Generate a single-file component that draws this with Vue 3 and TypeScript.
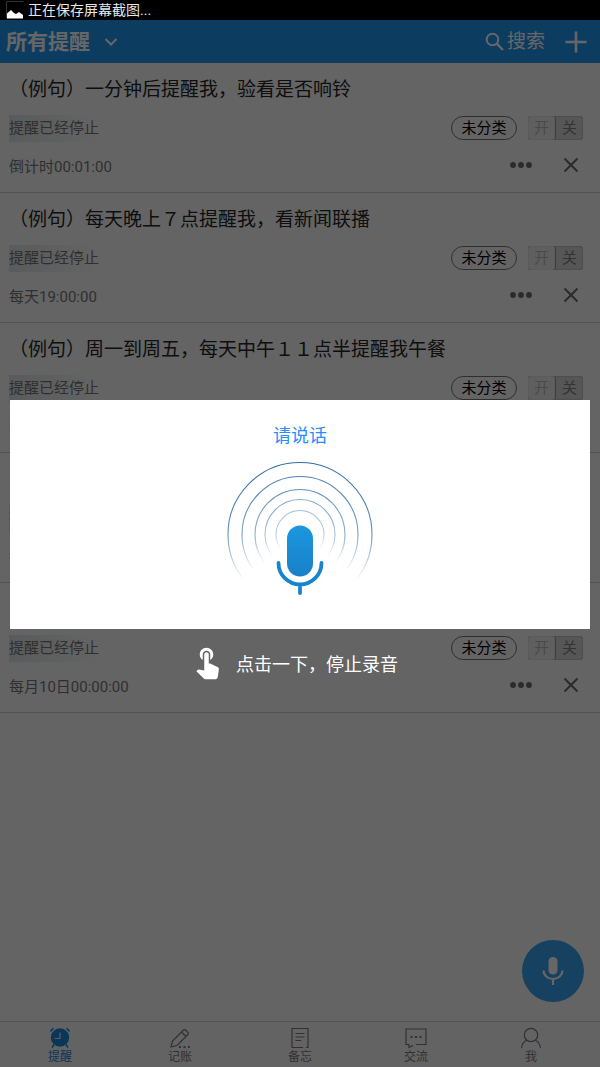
<script setup lang="ts">
import { ref } from 'vue'

interface Reminder {
  id: number
  title: string
  schedule: string
  enabled: boolean
}

const reminders = ref<Reminder[]>([
  { id: 1, title: '（例句）一分钟后提醒我，验看是否响铃', schedule: '倒计时00:01:00', enabled: false },
  { id: 2, title: '（例句）每天晚上７点提醒我，看新闻联播', schedule: '每天19:00:00', enabled: false },
  { id: 3, title: '（例句）周一到周五，每天中午１１点半提醒我午餐', schedule: '每周11:30:00', enabled: false },
  { id: 4, title: '（例句）每年提醒我，过生日', schedule: '每年00:00:00', enabled: false },
  { id: 5, title: '（例句）每月１０日提醒我，还款', schedule: '每月10日00:00:00', enabled: false },
])

const rings = [72, 58, 45, 35, 24]
const tabs = [
  { key: 'remind', label: '提醒' },
  { key: 'account', label: '记账' },
  { key: 'memo', label: '备忘' },
  { key: 'chat', label: '交流' },
  { key: 'me', label: '我' },
]
const activeTab = ref('remind')
</script>

<template>
  <div class="screen">
    <div class="status-bar">
      <svg class="picture" viewBox="0 0 18 18" aria-hidden="true">
        <path d="M0.5 17V0.500h17" fill="none" stroke="#333" />
        <path d="M1 17.500v-5L5 9l3 3 2 1 3-2 4 3v3.500z" fill="#fff" />
      </svg>
      <span>正在保存屏幕截图...</span>
    </div>

    <div class="app">
      <header class="top-bar">
        <button class="filter" type="button">
          <span>所有提醒</span>
          <svg width="14" height="10" viewBox="0 0 14 10" aria-hidden="true">
            <path d="M1.500 2l5.500 5.500L12.500 2" fill="none" stroke="currentColor" stroke-width="2" />
          </svg>
        </button>
        <button class="search" type="button">
          <svg width="20" height="20" viewBox="0 0 20 20" fill="none" stroke="currentColor" aria-hidden="true">
            <circle cx="7.500" cy="7.500" r="5.800" stroke-width="2" />
            <path d="M11.700 11.700l6.300 6.300" stroke-width="2.400" />
          </svg>
          <span>搜索</span>
        </button>
        <button class="add" type="button" aria-label="添加">
          <svg width="22" height="22" viewBox="0 0 22 22" aria-hidden="true">
            <path d="M11 0.500v21M0.500 11h21" stroke="currentColor" stroke-width="2.600" />
          </svg>
        </button>
      </header>

      <main>
        <ul class="list">
          <li v-for="item in reminders" :key="item.id" class="row">
            <h2 class="title">{{ item.title }}</h2>
            <div class="line state-line">
              <span class="state">提醒已经停止</span>
              <button class="tag" type="button">未分类</button>
              <label class="switch">
                <input v-model="item.enabled" type="checkbox" aria-label="提醒开关" />
                <span class="on">开</span>
                <span class="off">关</span>
              </label>
            </div>
            <div class="line">
              <span class="schedule">{{ item.schedule }}</span>
              <button class="icon-button more" type="button" aria-label="更多">
                <svg width="24" height="8" viewBox="0 0 24 8" fill="currentColor" aria-hidden="true">
                  <circle cx="4" cy="4" r="2.900" />
                  <circle cx="12" cy="4" r="2.900" />
                  <circle cx="20" cy="4" r="2.900" />
                </svg>
              </button>
              <button class="icon-button" type="button" aria-label="删除">
                <svg width="16" height="16" viewBox="0 0 16 16" aria-hidden="true">
                  <path d="M1.500 1.500l13 13M14.500 1.500l-13 13" stroke="currentColor" stroke-width="2" />
                </svg>
              </button>
            </div>
          </li>
        </ul>
        <button class="record" type="button" aria-label="语音">
          <svg width="24" height="32" viewBox="0 0 24 32" fill="none" stroke="currentColor" aria-hidden="true">
            <rect x="7.500" y="2" width="9" height="17.500" rx="4.500" fill="currentColor" stroke="none" />
            <path d="M2.500 15.500a9.500 8.500 0 0 0 19 0M12 24v6" stroke-width="2.200" />
          </svg>
        </button>
      </main>

      <nav class="tabs">
        <button
          v-for="tab in tabs"
          :key="tab.key"
          type="button"
          :class="['tab', { active: tab.key === activeTab }]"
          @click="activeTab = tab.key"
        >
          <svg width="22" height="22" viewBox="0 0 22 22" fill="none" stroke="currentColor" stroke-width="1.200" aria-hidden="true">
            <g v-if="tab.key === 'remind'">
              <circle cx="11" cy="10.500" r="9.200" fill="currentColor" stroke="none" />
              <path d="M1.500 4.500q1-2 3-3M20.500 4.500q-1-2-3-3M5 17.500l-2 3M17 17.500l2 3" stroke-width="1.600" />
              <path d="M11 5.500V11.500H5.500" stroke="#e8e8e8" />
            </g>
            <g v-else-if="tab.key === 'account'">
              <path d="M2 20l1.500-6L14 3.500q1.500-1.800 3 0l1.500 1.500q1.500 1.500 0 3L8 18.500zM12.500 5l4.500 4.500" />
              <path d="M10 20h2M14.500 20h2M19 20h2" stroke-width="2" />
            </g>
            <g v-else-if="tab.key === 'memo'">
              <path d="M17 20.500h2V1.500H3v19h11M6.500 6.500h9M6.500 10h9M6.500 13.500h6" />
            </g>
            <g v-else-if="tab.key === 'chat'">
              <path d="M11 17.500h10V2H1v15.500h3v3l4-2" />
              <path d="M5.500 10h2M10 10h2M14.500 10h2" stroke-width="2" />
            </g>
            <g v-else>
              <circle cx="11" cy="8" r="6.700" />
              <path d="M1.500 21q.5-5.500 5.500-8M20.500 21q-.5-5.500-5.500-8" />
            </g>
          </svg>
          <span>{{ tab.label }}</span>
        </button>
      </nav>

      <div class="overlay">
        <section class="dialog" role="dialog" aria-label="请说话">
          <p class="prompt">请说话</p>
          <svg class="voice" width="160" height="150" viewBox="220 454 160 150" fill="none" aria-hidden="true">
            <defs>
              <linearGradient id="ring-fade" x1="0" y1="0" x2="0" y2="1">
                <stop offset="0" stop-color="#2f6da5" />
                <stop offset="0.500" stop-color="#2f6da5" stop-opacity="0.750" />
                <stop offset="0.820" stop-color="#2f6da5" stop-opacity="0" />
              </linearGradient>
              <linearGradient id="mic-fill" x1="0" y1="0" x2="0" y2="1">
                <stop offset="0" stop-color="#1c97df" />
                <stop offset="1" stop-color="#1880c8" />
              </linearGradient>
            </defs>
            <circle
              v-for="(r, i) in rings"
              :key="r"
              cx="300"
              cy="534.500"
              :r="r"
              stroke="url(#ring-fade)"
              stroke-width="1.100"
              :opacity="1 - i * 0.14"
            />
            <rect x="287" y="525.500" width="26" height="51" rx="13" fill="url(#mic-fill)" />
            <path d="M278.500 563a21.500 21.500 0 0 0 43 0M300 585v8" stroke="#1785cd" stroke-width="3.800" stroke-linecap="round" />
          </svg>
        </section>
        <button class="hint" type="button">
          <svg width="24" height="33" viewBox="4.500 2.500 16 22" fill="currentColor" aria-hidden="true">
            <path d="M9 11.240V7.500C9 6.120 10.120 5 11.500 5S14 6.120 14 7.500v3.740c1.210-.81 2-2.180 2-3.740C16 5.010 13.990 3 11.500 3S7 5.010 7 7.500c0 1.560.79 2.930 2 3.740zm9.840 4.630l-4.540-2.260c-.17-.07-.35-.11-.54-.11H13v-6c0-.83-.67-1.500-1.500-1.500S10 6.670 10 7.500v10.740l-3.430-.72c-.08-.01-.15-.03-.24-.03-.31 0-.59.13-.79.33l-.79.8 4.940 4.940c.27.27.65.44 1.060.44h6.790c.75 0 1.330-.55 1.440-1.280l.75-5.270c.01-.07.02-.14.02-.2 0-.62-.38-1.160-.91-1.380z" />
          </svg>
          <span>点击一下，停止录音</span>
        </button>
      </div>
    </div>
  </div>
</template>

<style scoped>
.screen {
  display: flex;
  flex-direction: column;
  min-height: 100vh;
  font-family: Roboto, "Noto Sans CJK SC", sans-serif;
  background: #fafafa;
}
button {
  margin: 0;
  padding: 0;
  border: 0;
  background: none;
  font-family: inherit;
  color: inherit;
  cursor: pointer;
}
svg {
  display: block;
  flex: none;
}
.status-bar {
  display: flex;
  align-items: center;
  gap: 4px;
  height: 20px;
  padding-left: 6px;
  overflow: hidden;
  background: #000;
  color: #e6e6e6;
  font-size: 14px;
  line-height: 22px;
}
.picture {
  width: 18px;
  height: 18px;
}
.app {
  position: relative;
  display: flex;
  flex: 1;
  flex-direction: column;
}
.top-bar {
  display: flex;
  align-items: center;
  height: 43px;
  padding: 0 13px 0 6px;
  background: #2196f3;
  color: #fff;
}
.filter {
  display: flex;
  align-items: center;
  gap: 14px;
  margin-right: auto;
  font-size: 21px;
  font-weight: 700;
  line-height: 42px;
}
.search {
  display: flex;
  align-items: center;
  gap: 2px;
  margin-right: 20px;
  font-size: 19px;
  line-height: 42px;
}
main {
  position: relative;
  flex: 1;
}
.list {
  margin: 0;
  padding: 0;
  list-style: none;
}
.row {
  padding: 0 17px 1px 9px;
  border-bottom: 1px solid #cacaca;
}
.title {
  margin: 0;
  overflow: hidden;
  color: #262626;
  font-size: 19px;
  font-weight: 400;
  line-height: 54px;
  white-space: nowrap;
}
.line {
  display: flex;
  align-items: center;
  height: 52px;
  color: #777;
  font-size: 15px;
}
.state-line {
  height: 22px;
}
.state {
  margin-right: auto;
  background: linear-gradient(90deg, #dde4e6, #fafafa);
  line-height: 27px;
}
.schedule {
  margin-right: auto;
}
.tag {
  width: 66px;
  height: 24px;
  margin-right: 11px;
  border: 1px solid #777;
  border-radius: 12px;
  color: #000;
  font-size: 15px;
  line-height: 20px;
}
.switch {
  position: relative;
  display: flex;
  width: 55px;
  height: 24px;
  border-radius: 3px;
  background: #d8d8d8;
  box-shadow: inset 0 0 2px #8a8a8a;
  line-height: 24px;
  text-align: center;
}
.switch input {
  position: absolute;
  inset: 0;
  width: 100%;
  height: 100%;
  margin: 0;
  opacity: 0;
}
.switch span {
  flex: 1;
}
.switch .on {
  border-right: 1px solid #999;
  border-radius: 3px;
  background: #eee;
  box-shadow: inset 0 0 1px #888;
  color: #b8b8b8;
}
.switch .off {
  color: #808080;
}
.icon-button {
  display: grid;
  place-items: center;
  width: 24px;
  height: 24px;
  color: #6b6b6b;
}
.more {
  margin-right: 26px;
}
.record {
  position: absolute;
  right: 16px;
  bottom: 19px;
  display: grid;
  place-items: center;
  width: 62px;
  height: 62px;
  border-radius: 50%;
  background: #39a4f0;
  color: #fff;
}
.tabs {
  display: grid;
  grid-template-columns: 120fr 120fr 120fr 112fr 118fr;
  height: 45px;
  padding-right: 10px;
  border-top: 1px solid #d2d2d2;
  background: #f7f7f7;
}
.tab {
  display: flex;
  flex-direction: column;
  align-items: center;
  padding-top: 5px;
  color: #7c7c7c;
  font-size: 12px;
  line-height: 17px;
}
.tab.active {
  color: #1b87dc;
}
.overlay {
  position: absolute;
  inset: 0;
  display: flex;
  flex-direction: column;
  justify-content: center;
  padding: 10px 10px 0;
  background: rgba(0, 0, 0, 0.6);
}
.dialog {
  display: flex;
  flex-direction: column;
  align-items: center;
  padding: 18px 0 25px;
  background: #fff;
}
.prompt {
  margin: 0;
  color: #2a8cff;
  font-size: 18px;
  line-height: 36px;
}
.hint {
  display: flex;
  align-items: center;
  align-self: center;
  gap: 16px;
  height: 68px;
  margin-right: 6px;
  color: #fff;
  font-size: 18px;
}
</style>

<style>
body {
  margin: 0;
}
</style>
